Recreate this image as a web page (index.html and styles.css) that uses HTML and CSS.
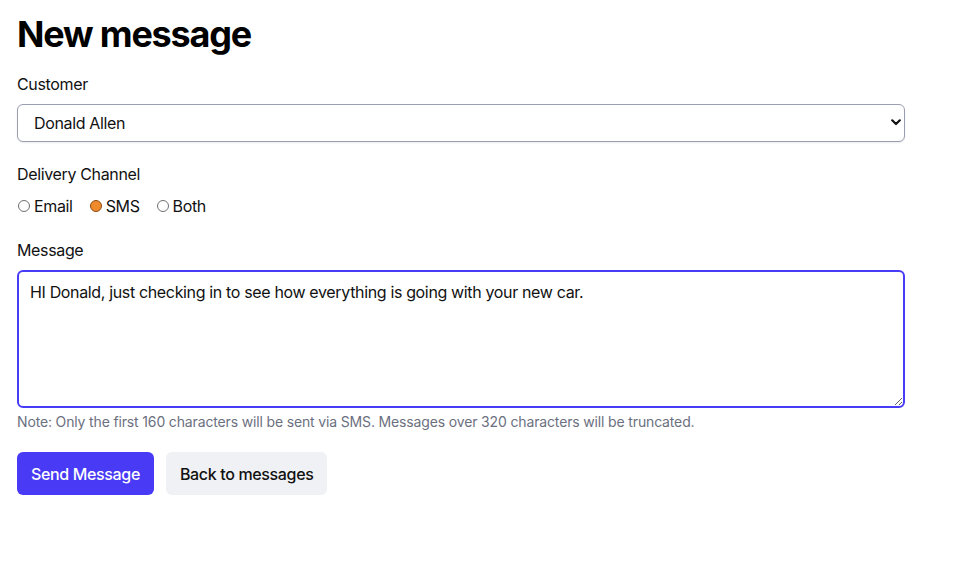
FILE: index.html
```html
<!DOCTYPE html>
<html lang="en">
<head>
<meta charset="utf-8">
<title>New message</title>
<link rel="stylesheet" href="styles.css">
</head>
<body>
<main class="page">
  <h1 class="title">New message</h1>
  <form class="form">
    <div class="field">
      <label class="label" for="customer">Customer</label>
      <div class="select-wrap">
        <select id="customer" class="select">
          <option>Donald Allen</option>
        </select>
        <svg class="chevron" width="10" height="7" viewBox="0 0 10 7" aria-hidden="true"><path d="M1.2 1.3 L5 5 L8.8 1.3" fill="none" stroke="#111" stroke-width="2.2" stroke-linecap="round" stroke-linejoin="round"/></svg>
      </div>
    </div>
    <div class="field">
      <span class="label">Delivery Channel</span>
      <div class="radios">
        <label class="radio"><input type="radio" name="channel" value="email"><span>Email</span></label>
        <label class="radio"><input type="radio" name="channel" value="sms" checked><span>SMS</span></label>
        <label class="radio"><input type="radio" name="channel" value="both"><span>Both</span></label>
      </div>
    </div>
    <div class="field">
      <label class="label" for="message">Message</label>
      <textarea id="message" class="textarea">HI Donald, just checking in to see how everything is going with your new car. </textarea>
      <p class="note">Note: Only the first 160 characters will be sent via SMS. Messages over 320 characters will be truncated.</p>
    </div>
    <div class="actions">
      <button type="button" class="btn btn-primary">Send Message</button>
      <button type="button" class="btn btn-secondary">Back to messages</button>
    </div>
  </form>
</main>
<script src="script.js"></script>
</body>
</html>
```
FILE: styles.css
```css
* { box-sizing: border-box; }
html, body { margin: 0; padding: 0; background: #fff; }
body {
  font-family: Inter, "Noto Sans", "Liberation Sans", sans-serif;
  color: #111;
  font-size: 16px;
  line-height: 24px;
  letter-spacing: -0.35px;
}
.page {
  padding: 14px 17px 8px;
  width: 922px;
}
.title {
  margin: 0 0 18px;
  font-size: 36px;
  line-height: 40px;
  font-weight: 700;
  letter-spacing: -1.2px;
  color: #000;
}
.form { display: flex; flex-direction: column; width: 888px; }
.field { display: flex; flex-direction: column; margin-bottom: 20px; }
.label { display: block; margin-bottom: 8px; font-size: 16px; line-height: 24px; }
.select-wrap { position: relative; }
.select {
  appearance: none;
  -webkit-appearance: none;
  width: 100%;
  height: 38px;
  padding: 0 16px;
  border: 1px solid #9a9eb0;
  border-radius: 6px;
  background: #fff;
  font-family: inherit;
  font-size: 16px;
  letter-spacing: -0.35px;
  color: #111;
  box-shadow: 0 1px 2px rgba(0,0,0,0.08);
}
.chevron { position: absolute; right: 4px; top: 15px; }
.radios { display: flex; align-items: center; gap: 16px; }
.radio { display: flex; align-items: center; gap: 4px; font-size: 16px; line-height: 24px; }
.radio input {
  appearance: none;
  -webkit-appearance: none;
  margin: 0 0 0 1px;
  width: 12px;
  height: 12px;
  border: 1px solid #6f6f6f;
  border-radius: 50%;
  background: #fff;
}
.radio input:checked {
  border: 1.5px solid #8f4a12;
  background: #ee8a2c;
}
.textarea {
  display: block;
  width: 100%;
  height: 138px;
  margin: 0;
  padding: 8px 11px;
  border: 2px solid #483cf7;
  border-radius: 6px;
  font-family: inherit;
  font-size: 16px;
  line-height: 24px;
  letter-spacing: -0.35px;
  color: #111;
  caret-color: #111;
  resize: vertical;
  outline: none;
}
.note {
  margin: 4px 0 0;
  font-size: 14px;
  line-height: 20px;
  letter-spacing: -0.15px;
  color: #6b7080;
}
.actions { display: flex; gap: 12px; margin-top: 0; }
.btn {
  height: 43px;
  padding: 0 14px;
  border: none;
  border-radius: 6px;
  font-family: inherit;
  font-size: 16px;
  font-weight: 500;
  line-height: 24px;
  letter-spacing: -0.35px;
}
.btn-primary { background: #483af5; color: #fff; }
.btn-secondary { background: #f0f1f4; color: #111; }
```
FILE: script.js
```js
var ta = document.getElementById('message');
ta.focus();
ta.setSelectionRange(ta.value.length, ta.value.length);
```
